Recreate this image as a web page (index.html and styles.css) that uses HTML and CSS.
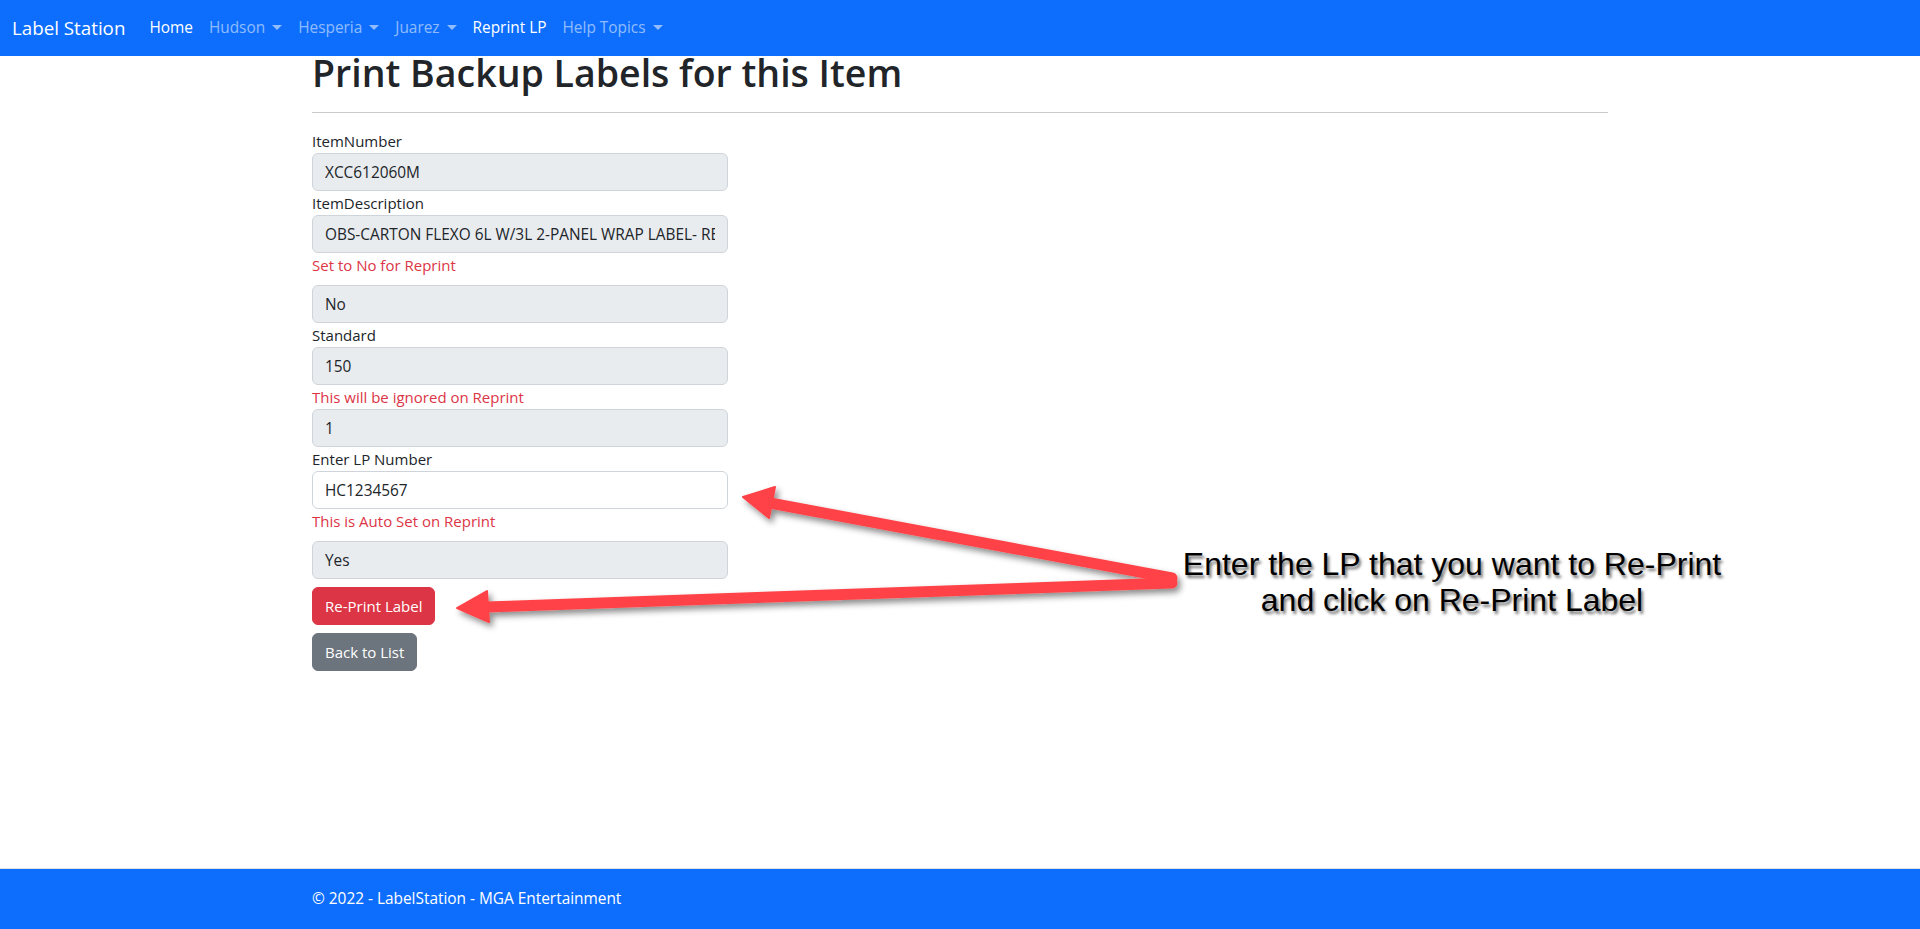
FILE: index.html
```html
<!DOCTYPE html>
<html lang="en">
<head>
<meta charset="utf-8">
<title>Label Station - Print Backup Labels</title>
<link rel="stylesheet" href="styles.css">
</head>
<body>
<header class="navbar">
  <a class="brand" href="#">Label Station</a>
  <nav class="nav">
    <a class="nav-link active" href="#">Home</a>
    <a class="nav-link dropdown" href="#">Hudson</a>
    <a class="nav-link dropdown" href="#">Hesperia</a>
    <a class="nav-link dropdown" href="#">Juarez</a>
    <a class="nav-link active" href="#">Reprint LP</a>
    <a class="nav-link dropdown" href="#">Help Topics</a>
  </nav>
</header>

<main class="container">
  <h1 class="title">Print Backup Labels for this Item</h1>
  <hr class="rule">
  <form class="form">
    <label class="label">ItemNumber</label>
    <input class="input" value="XCC612060M" disabled>
    <label class="label">ItemDescription</label>
    <input class="input" value="OBS-CARTON FLEXO 6L W/3L 2-PANEL WRAP LABEL- RED" disabled>
    <span class="note spaced">Set to No for Reprint</span>
    <input class="input" value="No" disabled>
    <label class="label">Standard</label>
    <input class="input" value="150" disabled>
    <span class="note">This will be ignored on Reprint</span>
    <input class="input" value="1" disabled>
    <label class="label">Enter LP Number</label>
    <input class="input editable" value="HC1234567">
    <span class="note spaced">This is Auto Set on Reprint</span>
    <input class="input" value="Yes" disabled>
    <div class="actions">
      <button type="button" class="btn btn-danger">Re-Print Label</button>
      <button type="button" class="btn btn-secondary">Back to List</button>
    </div>
  </form>
</main>

<footer class="footer">
  <div class="container">&copy; 2022 - LabelStation - MGA Entertainment</div>
</footer>

<svg class="annot-arrows" width="1920" height="929" viewBox="0 0 1920 929" aria-hidden="true">
  <defs>
    <filter id="sh" x="-10%" y="-50%" width="120%" height="200%">
      <feDropShadow dx="3" dy="4" stdDeviation="3" flood-color="#000" flood-opacity="0.45"/>
    </filter>
  </defs>
  <g filter="url(#sh)" fill="#ff4347" stroke="#ff4347">
    <line x1="1172" y1="578" x2="770" y2="503" stroke-width="11" stroke-linecap="round"/>
    <polygon points="743,497 775,487 769,518" stroke-width="2" stroke-linejoin="round"/>
    <line x1="1172" y1="583" x2="486" y2="607" stroke-width="11" stroke-linecap="round"/>
    <polygon points="457,608 487,591 489,622" stroke-width="2" stroke-linejoin="round"/>
  </g>
</svg>
<div class="annot-text">Enter the LP that you want to Re-Print<br>and click on Re-Print Label</div>
</body>
</html>
```

FILE: styles.css
```css
* { box-sizing: border-box; }

html, body { margin: 0; padding: 0; }

body {
  font-family: "Open Sans", "Noto Sans", sans-serif;
  font-size: 15px;
  line-height: 24px;
  color: #212529;
  background: #fff;
  min-height: 929px;
  display: flex;
  flex-direction: column;
  position: relative;
}

a { text-decoration: none; }

.navbar {
  height: 56px;
  background: #0d6efd;
  display: flex;
  align-items: center;
  padding: 0 12px;
}

.brand {
  color: #fff;
  font-size: 18.75px;
  line-height: 30px;
  margin-right: 16px;
}

.nav { display: flex; align-items: center; }

.nav-link {
  color: rgba(255, 255, 255, 0.55);
  padding: 8px;
  font-size: 15.4px;
  line-height: 24px;
}

.nav-link.active { color: #fff; }

.nav-link.dropdown::after {
  content: "";
  display: inline-block;
  margin-left: 7px;
  vertical-align: 3px;
  border-top: 5px solid currentColor;
  border-left: 5px solid transparent;
  border-right: 5px solid transparent;
}

.container {
  width: 1320px;
  margin: 0 auto;
  padding: 0 12px;
}

.title {
  font-size: 37.5px;
  line-height: 38px;
  font-weight: 600;
  margin: -2px 0 0;
  color: #212529;
}

.rule {
  margin: 20px 0 16px;
  border: 0;
  border-top: 1px solid #c8cacc;
  height: 0;
}

.form {
  width: 416px;
  display: flex;
  flex-direction: column;
}

.label { display: block; height: 24px; }

.note {
  color: #dc3545;
  height: 24px;
}

.note.spaced { margin-bottom: 8px; }

.input {
  display: block;
  width: 100%;
  height: 38px;
  padding: 6px 12px;
  font-family: inherit;
  font-size: 15.4px;
  line-height: 24px;
  color: #212529;
  background: #e9ecef;
  border: 1px solid #ced4da;
  border-radius: 6px;
  opacity: 1;
  -webkit-text-fill-color: #212529;
}

.input.editable { background: #fff; }

.actions {
  display: flex;
  flex-direction: column;
  align-items: flex-start;
  gap: 8px;
  margin-top: 8px;
}

.btn {
  font-family: inherit;
  font-size: 15px;
  line-height: 24px;
  height: 38px;
  padding: 6px 12px;
  border: 1px solid transparent;
  border-radius: 6px;
  color: #fff;
}

.btn-danger { background: #dc3545; border-color: #dc3545; }
.btn-secondary { background: #6c757d; border-color: #6c757d; }

.footer {
  margin-top: auto;
  background: #0d6efd;
  border-top: 1px solid #dee2e6;
  color: #fff;
  font-size: 15.4px;
  line-height: 60px;
  height: 61px;
}

.annot-arrows {
  position: absolute;
  left: 0;
  top: 0;
  pointer-events: none;
}

.annot-text {
  position: absolute;
  left: 1152px;
  top: 546px;
  width: 600px;
  text-align: center;
  font-family: "Liberation Sans", Arial, sans-serif;
  font-size: 32px;
  line-height: 36px;
  color: #000;
  text-shadow: 2px 3px 3px rgba(0, 0, 0, 0.55);
}
```
